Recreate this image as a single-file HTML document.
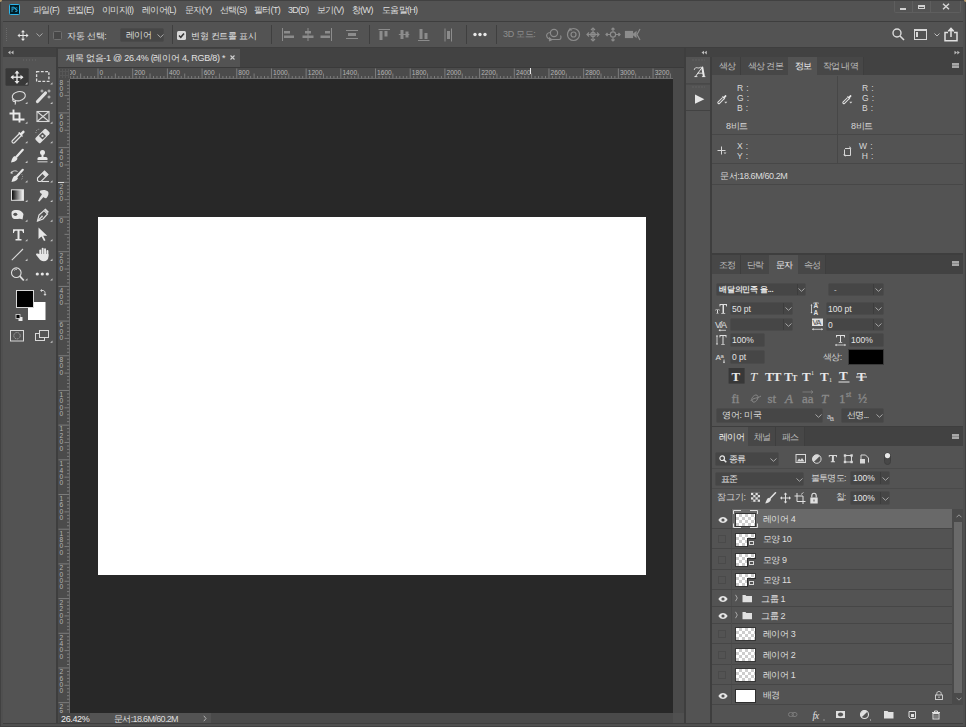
<!DOCTYPE html>
<html><head><meta charset="utf-8">
<style>
*{margin:0;padding:0;box-sizing:border-box}
html,body{width:966px;height:727px;overflow:hidden;background:#414141;font-family:"Liberation Sans",sans-serif;color:#d8d8d8}
.a{position:absolute}
.k{font-size:9px;letter-spacing:-0.7px;white-space:nowrap;line-height:10px}
</style></head><body>
<!-- frame -->
<div class="a" style="left:1px;top:1px;width:964px;height:725px;background:#4f4f4f"></div>
<!-- menu bar -->
<div class="a" style="left:1px;top:1px;width:962px;height:20px;background:#535353"></div>
<!-- options bar -->
<div class="a" style="left:3px;top:21px;width:960px;height:1px;background:#3e3e3e"></div>
<div class="a" style="left:3px;top:22px;width:960px;height:25px;background:#535353"></div>
<div class="a" style="left:3px;top:47px;width:960px;height:1px;background:#3e3e3e"></div>
<!-- toolbar -->
<div class="a" style="left:3px;top:48px;width:53px;height:9px;background:#424242"></div>
<div class="a" style="left:3px;top:57px;width:53px;height:666px;background:#535353"></div>
<div class="a" style="left:56px;top:48px;width:2px;height:675px;background:#3e3e3e"></div>

<!-- ===== TOOLBAR ===== -->
<svg class="a" style="left:0;top:0" width="58" height="350" viewBox="0 0 58 350">
<path d="M10.5 50.5L8 52.5L10.5 54.5z M13.5 50.5L11 52.5L13.5 54.5z" fill="#bdbdbd"/>
<g fill="#6a6a6a"><rect x="23" y="59.5" width="1" height="1"/><rect x="26" y="59.5" width="1" height="1"/><rect x="29" y="59.5" width="1" height="1"/><rect x="32" y="59.5" width="1" height="1"/><rect x="35" y="59.5" width="1" height="1"/></g>
<rect x="5.5" y="68.2" width="23.2" height="17.6" rx="1" fill="#383838"/>
<!-- move -->
<g fill="#e8e8e8"><rect x="11.5" y="76.5" width="11" height="1.4"/><rect x="16.3" y="71.5" width="1.4" height="11"/>
<path d="M17 70.5L19.5 73.5H14.5z M17 84L19.5 81H14.5z M10.5 77.2L13.5 74.7V79.7z M23.5 77.2L20.5 74.7V79.7z"/></g>
<!-- marquee -->
<rect x="36.6" y="71.6" width="12.3" height="9.8" fill="none" stroke="#dcdcdc" stroke-width="1.3" stroke-dasharray="2.8 1.5"/>
<!-- lasso -->
<g fill="none" stroke="#dedede" stroke-width="1.1"><ellipse cx="18.8" cy="96.2" rx="6.6" ry="4.6" transform="rotate(-12 18.8 96.2)"/><path d="M13.5 98.5C12 100 13 102 15 101.5C16 101 15.5 103 15 104.5"/></g>
<!-- magic wand -->
<path d="M37.5 101.5L45.5 93" stroke="#e0e0e0" stroke-width="3.2" stroke-linecap="round"/>
<path d="M42 89.5V92.5M40.5 91H43.5M49 89.5V92.5M47.5 91H50.5M49 95.5V98.5M47.5 97H50.5" stroke="#d0d0d0" stroke-width="0.9"/>
<!-- crop -->
<g fill="none" stroke="#e8e8e8" stroke-width="1.9"><path d="M13.5 109.5V119.5H24.5M9.5 113.5H19.5V122.5"/></g>
<!-- frame -->
<g fill="none" stroke="#d8d8d8" stroke-width="1.1"><rect x="37" y="111.5" width="12" height="10"/><path d="M37 111.5L49 121.5M49 111.5L37 121.5"/></g>
<!-- eyedropper -->
<g fill="none" stroke="#e0e0e0" stroke-width="1.2"><path d="M19 134L12.5 140.5C11.8 141.2 11.8 142 12.5 142.6C13.1 143.2 13.9 143.2 14.6 142.5L21 136"/></g>
<path d="M18 133L22 137L23 136L22 135L24.5 132.5C25 131.5 24 130 23 130.5L20.5 133L19.5 132z" fill="#e8e8e8"/>
<!-- healing -->
<g transform="rotate(-45 42.5 136)"><rect x="35" y="132.5" width="15" height="7" rx="1.5" fill="#e0e0e0"/><rect x="40" y="133.5" width="5" height="5" fill="#555"/><circle cx="42.5" cy="136" r="1.2" fill="#e0e0e0"/></g>
<path d="M36 133A3 3 0 0 1 40 129.5" stroke="#bbb" stroke-width="0.8" fill="none" stroke-dasharray="1 1"/>
<!-- brush -->
<path d="M22.8 149.8L16.5 156.8" stroke="#e6e6e6" stroke-width="2.2" stroke-linecap="round"/>
<path d="M15 156C12.5 156.5 12 159 11 162.5C14 162 17 161 17.5 158.5z" fill="#e6e6e6"/>
<!-- stamp -->
<g fill="#e6e6e6"><circle cx="42.5" cy="152.5" r="2.5"/><rect x="41.5" y="154" width="2" height="3"/><path d="M37.5 160V158.5C37.5 157.5 38.5 157 39.5 157H45.5C46.5 157 47.5 157.5 47.5 158.5V160z"/><rect x="37.5" y="161" width="10" height="1.5" fill="#aaa"/></g>
<!-- history brush -->
<path d="M22.8 169.8L16.8 176.3" stroke="#e6e6e6" stroke-width="2.2" stroke-linecap="round"/>
<path d="M15.5 175.5C13 176 12.5 178.5 11.5 182C14.5 181.5 17.5 180.5 18 178z" fill="#e6e6e6"/>
<path d="M11 172.5C13 170.5 16 170.5 17.5 171.5" stroke="#d0d0d0" stroke-width="1" fill="none"/><path d="M10 173L12.5 171V174z" fill="#d8d8d8"/>
<path d="M20 173C23 174 23.5 178 21 180" stroke="#aaa" stroke-width="0.8" fill="none" stroke-dasharray="1 1"/>
<!-- eraser -->
<g fill="none" stroke="#e0e0e0" stroke-width="1.1"><path d="M37.5 178L44.5 171L48 174.5L41 181.5H38.5L37.5 180.5z"/><path d="M41.5 181.5H49"/></g>
<path d="M42 173.5L44.5 171L48 174.5L45.5 177z" fill="#e0e0e0"/>
<!-- gradient -->
<defs><linearGradient id="gr" x1="0" x2="1"><stop offset="0" stop-color="#000"/><stop offset="1" stop-color="#fff"/></linearGradient></defs>
<rect x="11.5" y="189.8" width="12" height="10.5" fill="url(#gr)" stroke="#e0e0e0" stroke-width="1"/>
<!-- smudge -->
<path d="M38 201C40 197 41 196 42 194C40 193 39 191.5 40.5 190.5C43 189.5 46.5 190 48 191.5C49 193 48.5 196 46.5 198C45.5 198.5 44 198 43.5 197L39.5 201.5z" fill="#e0e0e0"/>
<!-- dodge -->
<path d="M11.5 213C11.5 210.5 14 210 17 210C20 210 22 211.5 23.5 214L22.5 219.5C20 218 17 219.5 14 219C12 218.5 11.5 216 11.5 213z" fill="#e6e6e6"/><ellipse cx="15.3" cy="214.3" rx="2" ry="1.6" fill="#555"/>
<!-- pen -->
<g fill="none" stroke="#e0e0e0" stroke-width="1.2"><path d="M37.5 221L39 215L44 210.5L47.5 214L43 219z"/><path d="M37.5 221L41.5 217"/></g><path d="M44 209.5L45.5 208.5L48.8 211.8L47.8 213.3z" fill="#e0e0e0"/><circle cx="42" cy="216.5" r="0.9" fill="#e0e0e0"/>
<!-- type -->
<path d="M13 229.3H24V233H23C22.8 231.2 22.3 230.8 20.5 230.8H19.5V239H21.5V240.5H15.5V239H17.5V230.8H16.5C14.7 230.8 14.2 231.2 14 233H13z" fill="#e8e8e8"/>
<!-- path select -->
<path d="M38.5 227.5V239L41.5 236.5L44 241L45.5 240.2L43.2 235.8H47.2z" fill="#e6e6e6"/>
<!-- line -->
<path d="M11.8 260.2L23 249" stroke="#dadada" stroke-width="1.1"/>
<!-- hand -->
<g fill="#e6e6e6"><rect x="39.3" y="249.5" width="1.9" height="7" rx="0.95"/><rect x="41.7" y="247.8" width="1.9" height="8" rx="0.95"/><rect x="44.1" y="248.3" width="1.9" height="8" rx="0.95"/><rect x="46.5" y="250" width="1.9" height="7" rx="0.95"/>
<path d="M39.3 254H48.4V257C48.4 259.5 46.5 261.3 43.8 261.3C41.5 261.3 40.3 260.3 39 258.5L36.2 255C35.6 254.2 36.6 253 37.5 253.6z"/></g>
<!-- zoom -->
<circle cx="16.3" cy="272.7" r="4.8" fill="none" stroke="#e0e0e0" stroke-width="1.1"/><path d="M19.8 276.2L23.8 280.5" stroke="#e0e0e0" stroke-width="1.8"/><path d="M14 270.5A3 3 0 0 1 17 269.5" stroke="#e0e0e0" stroke-width="0.7" fill="none"/>
<!-- dots -->
<g fill="#e6e6e6"><circle cx="37.3" cy="274" r="1.6"/><circle cx="42.3" cy="274" r="1.6"/><circle cx="47.3" cy="274" r="1.6"/></g>
<path d="M25.2 84.5H27.5V82.2z" fill="#c8c8c8"/><path d="M25.2 104.1H27.5V101.8z" fill="#c8c8c8"/><path d="M25.2 123.7H27.5V121.4z" fill="#c8c8c8"/><path d="M25.2 143.3H27.5V141.0z" fill="#c8c8c8"/><path d="M25.2 162.9H27.5V160.6z" fill="#c8c8c8"/><path d="M25.2 182.5H27.5V180.2z" fill="#c8c8c8"/><path d="M25.2 202.1H27.5V199.8z" fill="#c8c8c8"/><path d="M25.2 221.7H27.5V219.4z" fill="#c8c8c8"/><path d="M25.2 241.3H27.5V239.0z" fill="#c8c8c8"/><path d="M25.2 260.9H27.5V258.6z" fill="#c8c8c8"/><path d="M25.2 280.5H27.5V278.2z" fill="#c8c8c8"/><path d="M50.2 84.5H52.5V82.2z" fill="#c8c8c8"/><path d="M50.2 104.1H52.5V101.8z" fill="#c8c8c8"/><path d="M50.2 123.7H52.5V121.4z" fill="#c8c8c8"/><path d="M50.2 143.3H52.5V141.0z" fill="#c8c8c8"/><path d="M50.2 162.9H52.5V160.6z" fill="#c8c8c8"/><path d="M50.2 182.5H52.5V180.2z" fill="#c8c8c8"/><path d="M50.2 202.1H52.5V199.8z" fill="#c8c8c8"/><path d="M50.2 221.7H52.5V219.4z" fill="#c8c8c8"/><path d="M50.2 241.3H52.5V239.0z" fill="#c8c8c8"/><path d="M50.2 260.9H52.5V258.6z" fill="#c8c8c8"/><path d="M50.2 280.5H52.5V278.2z" fill="#c8c8c8"/>
<!-- colors -->
<rect x="28" y="302" width="17.5" height="18" fill="#fff"/>
<rect x="16.5" y="290.5" width="17" height="17" fill="#000" stroke="#d8d8d8" stroke-width="1"/>
<path d="M41.5 290.5H43C44 290.5 45 291.5 45 292.5V294.5" stroke="#d8d8d8" stroke-width="1" fill="none"/><path d="M40 290.5L42 289V292z M45 296L43.5 294H46.5z" fill="#d8d8d8"/>
<rect x="18.5" y="317" width="4" height="4" fill="#e8e8e8"/><rect x="16" y="314.5" width="4" height="4" fill="#000" stroke="#ddd" stroke-width="0.8"/>
<!-- quick mask / screen -->
<rect x="10.5" y="330.5" width="13" height="10.5" fill="none" stroke="#d8d8d8" stroke-width="1"/><circle cx="17" cy="335.7" r="3.2" fill="none" stroke="#bbb" stroke-width="0.8" stroke-dasharray="1.2 0.8"/>
<rect x="35.5" y="333.5" width="9" height="7" fill="none" stroke="#d8d8d8" stroke-width="1"/><rect x="39.5" y="330.5" width="9" height="7" fill="#555" stroke="#d8d8d8" stroke-width="1"/>
<path d="M50.2 342.8H52.5V340.5z" fill="#c8c8c8"/>
</svg>

<!-- doc tab bar -->
<div class="a" style="left:58px;top:48px;width:626px;height:19px;background:#424242"></div>
<div class="a" style="left:58px;top:49px;width:182px;height:18px;background:#535353"></div>
<div class="a" style="left:58px;top:67px;width:626px;height:1px;background:#3a3a3a"></div>
<!-- rulers -->
<div class="a" style="left:58px;top:68px;width:615px;height:11px;background:#4b4b4b"></div>
<div class="a" style="left:58px;top:68px;width:12px;height:645px;background:#4b4b4b"></div>
<!-- canvas -->
<div class="a" style="left:70px;top:79px;width:603px;height:634px;background:#282828"></div>
<div class="a" style="left:98px;top:217px;width:548px;height:358px;background:#ffffff"></div>

<!-- ===== DOC TAB ===== -->
<div class="a k" style="left:66px;top:53px;color:#e2e2e2;letter-spacing:-0.25px">제목 없음-1 @ 26.4% (레이어 4, RGB/8) *</div>
<svg class="a" style="left:230px;top:55px" width="5" height="5" viewBox="0 0 5 5"><path d="M0.5 0.5L4.5 4.5M4.5 0.5L0.5 4.5" stroke="#cfcfcf" stroke-width="1.1"/></svg>
<!-- rulers -->
<svg class="a" style="left:58px;top:68px" width="12" height="11" viewBox="0 0 12 11"><g fill="#565656"><rect x="1" y="1" width="1" height="9"/><rect x="4" y="1" width="1" height="9"/><rect x="7" y="1" width="1" height="9"/><rect x="10" y="1" width="1" height="9"/><rect x="1" y="3" width="10" height="1"/><rect x="1" y="7" width="10" height="1"/></g></svg>
<svg class="a" style="left:0;top:68px" width="673" height="11" viewBox="0 0 673 11"><defs><clipPath id="tc"><rect x="70" y="0" width="603" height="11"/></clipPath></defs><g clip-path="url(#tc)"><g fill="#7c7c7c"><rect x="62.81" y="0.5" width="1" height="10"/><rect x="66.28" y="8" width="1" height="2.5"/><rect x="69.75" y="8" width="1" height="2.5"/><rect x="73.22" y="8" width="1" height="2.5"/><rect x="76.69" y="8" width="1" height="2.5"/><rect x="80.16" y="5.5" width="1" height="5"/><rect x="83.62" y="8" width="1" height="2.5"/><rect x="87.09" y="8" width="1" height="2.5"/><rect x="90.56" y="8" width="1" height="2.5"/><rect x="94.03" y="8" width="1" height="2.5"/><rect x="97.50" y="0.5" width="1" height="10"/><rect x="100.97" y="8" width="1" height="2.5"/><rect x="104.44" y="8" width="1" height="2.5"/><rect x="107.91" y="8" width="1" height="2.5"/><rect x="111.38" y="8" width="1" height="2.5"/><rect x="114.84" y="5.5" width="1" height="5"/><rect x="118.31" y="8" width="1" height="2.5"/><rect x="121.78" y="8" width="1" height="2.5"/><rect x="125.25" y="8" width="1" height="2.5"/><rect x="128.72" y="8" width="1" height="2.5"/><rect x="132.19" y="0.5" width="1" height="10"/><rect x="135.66" y="8" width="1" height="2.5"/><rect x="139.13" y="8" width="1" height="2.5"/><rect x="142.60" y="8" width="1" height="2.5"/><rect x="146.07" y="8" width="1" height="2.5"/><rect x="149.53" y="5.5" width="1" height="5"/><rect x="153.00" y="8" width="1" height="2.5"/><rect x="156.47" y="8" width="1" height="2.5"/><rect x="159.94" y="8" width="1" height="2.5"/><rect x="163.41" y="8" width="1" height="2.5"/><rect x="166.88" y="0.5" width="1" height="10"/><rect x="170.35" y="8" width="1" height="2.5"/><rect x="173.82" y="8" width="1" height="2.5"/><rect x="177.29" y="8" width="1" height="2.5"/><rect x="180.76" y="8" width="1" height="2.5"/><rect x="184.22" y="5.5" width="1" height="5"/><rect x="187.69" y="8" width="1" height="2.5"/><rect x="191.16" y="8" width="1" height="2.5"/><rect x="194.63" y="8" width="1" height="2.5"/><rect x="198.10" y="8" width="1" height="2.5"/><rect x="201.57" y="0.5" width="1" height="10"/><rect x="205.04" y="8" width="1" height="2.5"/><rect x="208.51" y="8" width="1" height="2.5"/><rect x="211.98" y="8" width="1" height="2.5"/><rect x="215.45" y="8" width="1" height="2.5"/><rect x="218.91" y="5.5" width="1" height="5"/><rect x="222.38" y="8" width="1" height="2.5"/><rect x="225.85" y="8" width="1" height="2.5"/><rect x="229.32" y="8" width="1" height="2.5"/><rect x="232.79" y="8" width="1" height="2.5"/><rect x="236.26" y="0.5" width="1" height="10"/><rect x="239.73" y="8" width="1" height="2.5"/><rect x="243.20" y="8" width="1" height="2.5"/><rect x="246.67" y="8" width="1" height="2.5"/><rect x="250.14" y="8" width="1" height="2.5"/><rect x="253.60" y="5.5" width="1" height="5"/><rect x="257.07" y="8" width="1" height="2.5"/><rect x="260.54" y="8" width="1" height="2.5"/><rect x="264.01" y="8" width="1" height="2.5"/><rect x="267.48" y="8" width="1" height="2.5"/><rect x="270.95" y="0.5" width="1" height="10"/><rect x="274.42" y="8" width="1" height="2.5"/><rect x="277.89" y="8" width="1" height="2.5"/><rect x="281.36" y="8" width="1" height="2.5"/><rect x="284.83" y="8" width="1" height="2.5"/><rect x="288.29" y="5.5" width="1" height="5"/><rect x="291.76" y="8" width="1" height="2.5"/><rect x="295.23" y="8" width="1" height="2.5"/><rect x="298.70" y="8" width="1" height="2.5"/><rect x="302.17" y="8" width="1" height="2.5"/><rect x="305.64" y="0.5" width="1" height="10"/><rect x="309.11" y="8" width="1" height="2.5"/><rect x="312.58" y="8" width="1" height="2.5"/><rect x="316.05" y="8" width="1" height="2.5"/><rect x="319.52" y="8" width="1" height="2.5"/><rect x="322.99" y="5.5" width="1" height="5"/><rect x="326.45" y="8" width="1" height="2.5"/><rect x="329.92" y="8" width="1" height="2.5"/><rect x="333.39" y="8" width="1" height="2.5"/><rect x="336.86" y="8" width="1" height="2.5"/><rect x="340.33" y="0.5" width="1" height="10"/><rect x="343.80" y="8" width="1" height="2.5"/><rect x="347.27" y="8" width="1" height="2.5"/><rect x="350.74" y="8" width="1" height="2.5"/><rect x="354.21" y="8" width="1" height="2.5"/><rect x="357.68" y="5.5" width="1" height="5"/><rect x="361.14" y="8" width="1" height="2.5"/><rect x="364.61" y="8" width="1" height="2.5"/><rect x="368.08" y="8" width="1" height="2.5"/><rect x="371.55" y="8" width="1" height="2.5"/><rect x="375.02" y="0.5" width="1" height="10"/><rect x="378.49" y="8" width="1" height="2.5"/><rect x="381.96" y="8" width="1" height="2.5"/><rect x="385.43" y="8" width="1" height="2.5"/><rect x="388.90" y="8" width="1" height="2.5"/><rect x="392.36" y="5.5" width="1" height="5"/><rect x="395.83" y="8" width="1" height="2.5"/><rect x="399.30" y="8" width="1" height="2.5"/><rect x="402.77" y="8" width="1" height="2.5"/><rect x="406.24" y="8" width="1" height="2.5"/><rect x="409.71" y="0.5" width="1" height="10"/><rect x="413.18" y="8" width="1" height="2.5"/><rect x="416.65" y="8" width="1" height="2.5"/><rect x="420.12" y="8" width="1" height="2.5"/><rect x="423.59" y="8" width="1" height="2.5"/><rect x="427.05" y="5.5" width="1" height="5"/><rect x="430.52" y="8" width="1" height="2.5"/><rect x="433.99" y="8" width="1" height="2.5"/><rect x="437.46" y="8" width="1" height="2.5"/><rect x="440.93" y="8" width="1" height="2.5"/><rect x="444.40" y="0.5" width="1" height="10"/><rect x="447.87" y="8" width="1" height="2.5"/><rect x="451.34" y="8" width="1" height="2.5"/><rect x="454.81" y="8" width="1" height="2.5"/><rect x="458.28" y="8" width="1" height="2.5"/><rect x="461.75" y="5.5" width="1" height="5"/><rect x="465.21" y="8" width="1" height="2.5"/><rect x="468.68" y="8" width="1" height="2.5"/><rect x="472.15" y="8" width="1" height="2.5"/><rect x="475.62" y="8" width="1" height="2.5"/><rect x="479.09" y="0.5" width="1" height="10"/><rect x="482.56" y="8" width="1" height="2.5"/><rect x="486.03" y="8" width="1" height="2.5"/><rect x="489.50" y="8" width="1" height="2.5"/><rect x="492.97" y="8" width="1" height="2.5"/><rect x="496.44" y="5.5" width="1" height="5"/><rect x="499.90" y="8" width="1" height="2.5"/><rect x="503.37" y="8" width="1" height="2.5"/><rect x="506.84" y="8" width="1" height="2.5"/><rect x="510.31" y="8" width="1" height="2.5"/><rect x="513.78" y="0.5" width="1" height="10"/><rect x="517.25" y="8" width="1" height="2.5"/><rect x="520.72" y="8" width="1" height="2.5"/><rect x="524.19" y="8" width="1" height="2.5"/><rect x="527.66" y="8" width="1" height="2.5"/><rect x="531.12" y="5.5" width="1" height="5"/><rect x="534.59" y="8" width="1" height="2.5"/><rect x="538.06" y="8" width="1" height="2.5"/><rect x="541.53" y="8" width="1" height="2.5"/><rect x="545.00" y="8" width="1" height="2.5"/><rect x="548.47" y="0.5" width="1" height="10"/><rect x="551.94" y="8" width="1" height="2.5"/><rect x="555.41" y="8" width="1" height="2.5"/><rect x="558.88" y="8" width="1" height="2.5"/><rect x="562.35" y="8" width="1" height="2.5"/><rect x="565.81" y="5.5" width="1" height="5"/><rect x="569.28" y="8" width="1" height="2.5"/><rect x="572.75" y="8" width="1" height="2.5"/><rect x="576.22" y="8" width="1" height="2.5"/><rect x="579.69" y="8" width="1" height="2.5"/><rect x="583.16" y="0.5" width="1" height="10"/><rect x="586.63" y="8" width="1" height="2.5"/><rect x="590.10" y="8" width="1" height="2.5"/><rect x="593.57" y="8" width="1" height="2.5"/><rect x="597.04" y="8" width="1" height="2.5"/><rect x="600.50" y="5.5" width="1" height="5"/><rect x="603.97" y="8" width="1" height="2.5"/><rect x="607.44" y="8" width="1" height="2.5"/><rect x="610.91" y="8" width="1" height="2.5"/><rect x="614.38" y="8" width="1" height="2.5"/><rect x="617.85" y="0.5" width="1" height="10"/><rect x="621.32" y="8" width="1" height="2.5"/><rect x="624.79" y="8" width="1" height="2.5"/><rect x="628.26" y="8" width="1" height="2.5"/><rect x="631.73" y="8" width="1" height="2.5"/><rect x="635.19" y="5.5" width="1" height="5"/><rect x="638.66" y="8" width="1" height="2.5"/><rect x="642.13" y="8" width="1" height="2.5"/><rect x="645.60" y="8" width="1" height="2.5"/><rect x="649.07" y="8" width="1" height="2.5"/><rect x="652.54" y="0.5" width="1" height="10"/><rect x="656.01" y="8" width="1" height="2.5"/><rect x="659.48" y="8" width="1" height="2.5"/><rect x="662.95" y="8" width="1" height="2.5"/><rect x="666.42" y="8" width="1" height="2.5"/><rect x="669.88" y="5.5" width="1" height="5"/></g><g fill="#b4b4b4" font-family="Liberation Sans" font-size="6.6"><text x="64.91" y="7.2">200</text><text x="99.60" y="7.2">0</text><text x="134.29" y="7.2">200</text><text x="168.98" y="7.2">400</text><text x="203.67" y="7.2">600</text><text x="238.36" y="7.2">800</text><text x="273.05" y="7.2">1000</text><text x="307.74" y="7.2">1200</text><text x="342.43" y="7.2">1400</text><text x="377.12" y="7.2">1600</text><text x="411.81" y="7.2">1800</text><text x="446.50" y="7.2">2000</text><text x="481.19" y="7.2">2200</text><text x="515.88" y="7.2">2400</text><text x="550.57" y="7.2">2600</text><text x="585.26" y="7.2">2800</text><text x="619.95" y="7.2">3000</text><text x="654.64" y="7.2">3200</text></g></g><rect x="70" y="10.2" width="603" height="0.8" fill="#727272"/></svg><svg class="a" style="left:58px;top:0" width="12" height="713" viewBox="0 0 12 713"><defs><clipPath id="lc"><rect x="0" y="79" width="12" height="634"/></clipPath></defs><g clip-path="url(#lc)"><g fill="#7c7c7c"><rect x="6.5" y="60.40" width="5" height="1"/><rect x="9" y="63.86" width="2.5" height="1"/><rect x="9" y="67.33" width="2.5" height="1"/><rect x="9" y="70.80" width="2.5" height="1"/><rect x="9" y="74.27" width="2.5" height="1"/><rect x="0.5" y="77.74" width="11" height="1"/><rect x="9" y="81.21" width="2.5" height="1"/><rect x="9" y="84.68" width="2.5" height="1"/><rect x="9" y="88.15" width="2.5" height="1"/><rect x="9" y="91.62" width="2.5" height="1"/><rect x="6.5" y="95.09" width="5" height="1"/><rect x="9" y="98.55" width="2.5" height="1"/><rect x="9" y="102.02" width="2.5" height="1"/><rect x="9" y="105.49" width="2.5" height="1"/><rect x="9" y="108.96" width="2.5" height="1"/><rect x="0.5" y="112.43" width="11" height="1"/><rect x="9" y="115.90" width="2.5" height="1"/><rect x="9" y="119.37" width="2.5" height="1"/><rect x="9" y="122.84" width="2.5" height="1"/><rect x="9" y="126.31" width="2.5" height="1"/><rect x="6.5" y="129.78" width="5" height="1"/><rect x="9" y="133.24" width="2.5" height="1"/><rect x="9" y="136.71" width="2.5" height="1"/><rect x="9" y="140.18" width="2.5" height="1"/><rect x="9" y="143.65" width="2.5" height="1"/><rect x="0.5" y="147.12" width="11" height="1"/><rect x="9" y="150.59" width="2.5" height="1"/><rect x="9" y="154.06" width="2.5" height="1"/><rect x="9" y="157.53" width="2.5" height="1"/><rect x="9" y="161.00" width="2.5" height="1"/><rect x="6.5" y="164.47" width="5" height="1"/><rect x="9" y="167.93" width="2.5" height="1"/><rect x="9" y="171.40" width="2.5" height="1"/><rect x="9" y="174.87" width="2.5" height="1"/><rect x="9" y="178.34" width="2.5" height="1"/><rect x="0.5" y="181.81" width="11" height="1"/><rect x="9" y="185.28" width="2.5" height="1"/><rect x="9" y="188.75" width="2.5" height="1"/><rect x="9" y="192.22" width="2.5" height="1"/><rect x="9" y="195.69" width="2.5" height="1"/><rect x="6.5" y="199.16" width="5" height="1"/><rect x="9" y="202.62" width="2.5" height="1"/><rect x="9" y="206.09" width="2.5" height="1"/><rect x="9" y="209.56" width="2.5" height="1"/><rect x="9" y="213.03" width="2.5" height="1"/><rect x="0.5" y="216.50" width="11" height="1"/><rect x="9" y="219.97" width="2.5" height="1"/><rect x="9" y="223.44" width="2.5" height="1"/><rect x="9" y="226.91" width="2.5" height="1"/><rect x="9" y="230.38" width="2.5" height="1"/><rect x="6.5" y="233.84" width="5" height="1"/><rect x="9" y="237.31" width="2.5" height="1"/><rect x="9" y="240.78" width="2.5" height="1"/><rect x="9" y="244.25" width="2.5" height="1"/><rect x="9" y="247.72" width="2.5" height="1"/><rect x="0.5" y="251.19" width="11" height="1"/><rect x="9" y="254.66" width="2.5" height="1"/><rect x="9" y="258.13" width="2.5" height="1"/><rect x="9" y="261.60" width="2.5" height="1"/><rect x="9" y="265.07" width="2.5" height="1"/><rect x="6.5" y="268.53" width="5" height="1"/><rect x="9" y="272.00" width="2.5" height="1"/><rect x="9" y="275.47" width="2.5" height="1"/><rect x="9" y="278.94" width="2.5" height="1"/><rect x="9" y="282.41" width="2.5" height="1"/><rect x="0.5" y="285.88" width="11" height="1"/><rect x="9" y="289.35" width="2.5" height="1"/><rect x="9" y="292.82" width="2.5" height="1"/><rect x="9" y="296.29" width="2.5" height="1"/><rect x="9" y="299.76" width="2.5" height="1"/><rect x="6.5" y="303.23" width="5" height="1"/><rect x="9" y="306.69" width="2.5" height="1"/><rect x="9" y="310.16" width="2.5" height="1"/><rect x="9" y="313.63" width="2.5" height="1"/><rect x="9" y="317.10" width="2.5" height="1"/><rect x="0.5" y="320.57" width="11" height="1"/><rect x="9" y="324.04" width="2.5" height="1"/><rect x="9" y="327.51" width="2.5" height="1"/><rect x="9" y="330.98" width="2.5" height="1"/><rect x="9" y="334.45" width="2.5" height="1"/><rect x="6.5" y="337.91" width="5" height="1"/><rect x="9" y="341.38" width="2.5" height="1"/><rect x="9" y="344.85" width="2.5" height="1"/><rect x="9" y="348.32" width="2.5" height="1"/><rect x="9" y="351.79" width="2.5" height="1"/><rect x="0.5" y="355.26" width="11" height="1"/><rect x="9" y="358.73" width="2.5" height="1"/><rect x="9" y="362.20" width="2.5" height="1"/><rect x="9" y="365.67" width="2.5" height="1"/><rect x="9" y="369.14" width="2.5" height="1"/><rect x="6.5" y="372.61" width="5" height="1"/><rect x="9" y="376.07" width="2.5" height="1"/><rect x="9" y="379.54" width="2.5" height="1"/><rect x="9" y="383.01" width="2.5" height="1"/><rect x="9" y="386.48" width="2.5" height="1"/><rect x="0.5" y="389.95" width="11" height="1"/><rect x="9" y="393.42" width="2.5" height="1"/><rect x="9" y="396.89" width="2.5" height="1"/><rect x="9" y="400.36" width="2.5" height="1"/><rect x="9" y="403.83" width="2.5" height="1"/><rect x="6.5" y="407.29" width="5" height="1"/><rect x="9" y="410.76" width="2.5" height="1"/><rect x="9" y="414.23" width="2.5" height="1"/><rect x="9" y="417.70" width="2.5" height="1"/><rect x="9" y="421.17" width="2.5" height="1"/><rect x="0.5" y="424.64" width="11" height="1"/><rect x="9" y="428.11" width="2.5" height="1"/><rect x="9" y="431.58" width="2.5" height="1"/><rect x="9" y="435.05" width="2.5" height="1"/><rect x="9" y="438.52" width="2.5" height="1"/><rect x="6.5" y="441.99" width="5" height="1"/><rect x="9" y="445.45" width="2.5" height="1"/><rect x="9" y="448.92" width="2.5" height="1"/><rect x="9" y="452.39" width="2.5" height="1"/><rect x="9" y="455.86" width="2.5" height="1"/><rect x="0.5" y="459.33" width="11" height="1"/><rect x="9" y="462.80" width="2.5" height="1"/><rect x="9" y="466.27" width="2.5" height="1"/><rect x="9" y="469.74" width="2.5" height="1"/><rect x="9" y="473.21" width="2.5" height="1"/><rect x="6.5" y="476.68" width="5" height="1"/><rect x="9" y="480.14" width="2.5" height="1"/><rect x="9" y="483.61" width="2.5" height="1"/><rect x="9" y="487.08" width="2.5" height="1"/><rect x="9" y="490.55" width="2.5" height="1"/><rect x="0.5" y="494.02" width="11" height="1"/><rect x="9" y="497.49" width="2.5" height="1"/><rect x="9" y="500.96" width="2.5" height="1"/><rect x="9" y="504.43" width="2.5" height="1"/><rect x="9" y="507.90" width="2.5" height="1"/><rect x="6.5" y="511.36" width="5" height="1"/><rect x="9" y="514.83" width="2.5" height="1"/><rect x="9" y="518.30" width="2.5" height="1"/><rect x="9" y="521.77" width="2.5" height="1"/><rect x="9" y="525.24" width="2.5" height="1"/><rect x="0.5" y="528.71" width="11" height="1"/><rect x="9" y="532.18" width="2.5" height="1"/><rect x="9" y="535.65" width="2.5" height="1"/><rect x="9" y="539.12" width="2.5" height="1"/><rect x="9" y="542.59" width="2.5" height="1"/><rect x="6.5" y="546.05" width="5" height="1"/><rect x="9" y="549.52" width="2.5" height="1"/><rect x="9" y="552.99" width="2.5" height="1"/><rect x="9" y="556.46" width="2.5" height="1"/><rect x="9" y="559.93" width="2.5" height="1"/><rect x="0.5" y="563.40" width="11" height="1"/><rect x="9" y="566.87" width="2.5" height="1"/><rect x="9" y="570.34" width="2.5" height="1"/><rect x="9" y="573.81" width="2.5" height="1"/><rect x="9" y="577.28" width="2.5" height="1"/><rect x="6.5" y="580.75" width="5" height="1"/><rect x="9" y="584.21" width="2.5" height="1"/><rect x="9" y="587.68" width="2.5" height="1"/><rect x="9" y="591.15" width="2.5" height="1"/><rect x="9" y="594.62" width="2.5" height="1"/><rect x="0.5" y="598.09" width="11" height="1"/><rect x="9" y="601.56" width="2.5" height="1"/><rect x="9" y="605.03" width="2.5" height="1"/><rect x="9" y="608.50" width="2.5" height="1"/><rect x="9" y="611.97" width="2.5" height="1"/><rect x="6.5" y="615.43" width="5" height="1"/><rect x="9" y="618.90" width="2.5" height="1"/><rect x="9" y="622.37" width="2.5" height="1"/><rect x="9" y="625.84" width="2.5" height="1"/><rect x="9" y="629.31" width="2.5" height="1"/><rect x="0.5" y="632.78" width="11" height="1"/><rect x="9" y="636.25" width="2.5" height="1"/><rect x="9" y="639.72" width="2.5" height="1"/><rect x="9" y="643.19" width="2.5" height="1"/><rect x="9" y="646.66" width="2.5" height="1"/><rect x="6.5" y="650.12" width="5" height="1"/><rect x="9" y="653.59" width="2.5" height="1"/><rect x="9" y="657.06" width="2.5" height="1"/><rect x="9" y="660.53" width="2.5" height="1"/><rect x="9" y="664.00" width="2.5" height="1"/><rect x="0.5" y="667.47" width="11" height="1"/><rect x="9" y="670.94" width="2.5" height="1"/><rect x="9" y="674.41" width="2.5" height="1"/><rect x="9" y="677.88" width="2.5" height="1"/><rect x="9" y="681.35" width="2.5" height="1"/><rect x="6.5" y="684.81" width="5" height="1"/><rect x="9" y="688.28" width="2.5" height="1"/><rect x="9" y="691.75" width="2.5" height="1"/><rect x="9" y="695.22" width="2.5" height="1"/><rect x="9" y="698.69" width="2.5" height="1"/><rect x="0.5" y="702.16" width="11" height="1"/><rect x="9" y="705.63" width="2.5" height="1"/><rect x="9" y="709.10" width="2.5" height="1"/></g><g fill="#b4b4b4" font-family="Liberation Sans" font-size="6.6"><text x="1.5" y="84.54">8</text><text x="1.5" y="90.94">0</text><text x="1.5" y="97.34">0</text><text x="1.5" y="119.23">6</text><text x="1.5" y="125.63">0</text><text x="1.5" y="132.03">0</text><text x="1.5" y="153.92">4</text><text x="1.5" y="160.32">0</text><text x="1.5" y="166.72">0</text><text x="1.5" y="188.61">2</text><text x="1.5" y="195.01">0</text><text x="1.5" y="201.41">0</text><text x="1.5" y="223.30">0</text><text x="1.5" y="257.99">2</text><text x="1.5" y="264.39">0</text><text x="1.5" y="270.79">0</text><text x="1.5" y="292.68">4</text><text x="1.5" y="299.08">0</text><text x="1.5" y="305.48">0</text><text x="1.5" y="327.37">6</text><text x="1.5" y="333.77">0</text><text x="1.5" y="340.17">0</text><text x="1.5" y="362.06">8</text><text x="1.5" y="368.46">0</text><text x="1.5" y="374.86">0</text><text x="1.5" y="396.75">1</text><text x="1.5" y="403.15">0</text><text x="1.5" y="409.55">0</text><text x="1.5" y="415.95">0</text><text x="1.5" y="431.44">1</text><text x="1.5" y="437.84">2</text><text x="1.5" y="444.24">0</text><text x="1.5" y="450.64">0</text><text x="1.5" y="466.13">1</text><text x="1.5" y="472.53">4</text><text x="1.5" y="478.93">0</text><text x="1.5" y="485.33">0</text><text x="1.5" y="500.82">1</text><text x="1.5" y="507.22">6</text><text x="1.5" y="513.62">0</text><text x="1.5" y="520.02">0</text><text x="1.5" y="535.51">1</text><text x="1.5" y="541.91">8</text><text x="1.5" y="548.31">0</text><text x="1.5" y="554.71">0</text><text x="1.5" y="570.20">2</text><text x="1.5" y="576.60">0</text><text x="1.5" y="583.00">0</text><text x="1.5" y="589.40">0</text><text x="1.5" y="604.89">2</text><text x="1.5" y="611.29">2</text><text x="1.5" y="617.69">0</text><text x="1.5" y="624.09">0</text><text x="1.5" y="639.58">2</text><text x="1.5" y="645.98">4</text><text x="1.5" y="652.38">0</text><text x="1.5" y="658.78">0</text><text x="1.5" y="674.27">2</text><text x="1.5" y="680.67">6</text><text x="1.5" y="687.07">0</text><text x="1.5" y="693.47">0</text><text x="1.5" y="708.96">2</text><text x="1.5" y="715.36">8</text><text x="1.5" y="721.76">0</text><text x="1.5" y="728.16">0</text></g></g><rect x="11.2" y="79" width="0.8" height="634" fill="#727272"/></svg>
<div class="a" style="left:530px;top:68px;width:1px;height:6px;background:#e8e8e8"></div>
<div class="a" style="left:58px;top:182px;width:6px;height:1px;background:#d8d8d8"></div>
<!-- v scrollbar -->
<div class="a" style="left:673px;top:68px;width:11px;height:645px;background:#4a4a4a"></div>
<!-- status bar -->
<div class="a" style="left:58px;top:713px;width:626px;height:10px;background:#4a4a4a"></div>
<div class="a" style="left:90px;top:713px;width:121px;height:10px;background:#535353"></div>
<!-- bottom border -->
<div class="a" style="left:3px;top:723px;width:960px;height:1px;background:#3e3e3e"></div>
<!-- docks -->
<div class="a" style="left:684px;top:48px;width:2px;height:675px;background:#3e3e3e"></div>
<div class="a" style="left:686px;top:48px;width:277px;height:9px;background:#424242"></div>
<div class="a" style="left:686px;top:57px;width:24px;height:666px;background:#535353"></div>
<div class="a" style="left:710px;top:57px;width:2px;height:666px;background:#3e3e3e"></div>
<!-- right panels -->
<div class="a" style="left:712px;top:57px;width:251px;height:18px;background:#424242"></div>
<div class="a" style="left:712px;top:75px;width:251px;height:178px;background:#535353"></div>
<div class="a" style="left:712px;top:253px;width:251px;height:2px;background:#3e3e3e"></div>
<div class="a" style="left:712px;top:255px;width:251px;height:19px;background:#424242"></div>
<div class="a" style="left:712px;top:274px;width:251px;height:152px;background:#535353"></div>
<div class="a" style="left:712px;top:426px;width:251px;height:1px;background:#3e3e3e"></div>
<div class="a" style="left:712px;top:427px;width:251px;height:19px;background:#424242"></div>
<div class="a" style="left:712px;top:446px;width:251px;height:277px;background:#535353"></div>


<!-- ===== STATUS BAR ===== -->
<div class="a" style="left:673px;top:713px;width:11px;height:10px;background:#505050"></div>
<div class="a" style="left:59px;top:713px;width:31px;height:10px;background:#474747"></div>
<div class="a k" style="left:61px;top:713.5px;color:#ececec;letter-spacing:-0.35px">26.42%</div>
<div class="a k" style="left:114px;top:713.5px;color:#dcdcdc;letter-spacing:-0.65px">문서:18.6M/60.2M</div>
<svg class="a" style="left:203px;top:715px" width="4" height="7" viewBox="0 0 4 7"><path d="M0.8 0.8L3 3.5L0.8 6.2" stroke="#bbb" fill="none" stroke-width="0.9"/></svg>
<!-- ===== NARROW COLUMN ===== -->
<svg class="a" style="left:684px;top:48px" width="279" height="66" viewBox="684 48 279 66">
<path d="M704 50.8L701.5 52.6L704 54.4z M706.8 50.8L704.3 52.6L706.8 54.4z" fill="#bdbdbd"/>
<path d="M954.5 50.8L957 52.6L954.5 54.4z M957.3 50.8L959.8 52.6L957.3 54.4z" fill="#bdbdbd"/>
<rect x="686" y="83.4" width="24" height="1" fill="#424242"/>
<rect x="686" y="110" width="24" height="1" fill="#424242"/>
<g fill="#616161"><rect x="692" y="59.5" width="2" height="1"/><rect x="695" y="59.5" width="2" height="1"/><rect x="698" y="59.5" width="2" height="1"/><rect x="701" y="59.5" width="2" height="1"/><rect x="704" y="59.5" width="1" height="1"/>
<rect x="692" y="86.5" width="2" height="1"/><rect x="695" y="86.5" width="2" height="1"/><rect x="698" y="86.5" width="2" height="1"/><rect x="701" y="86.5" width="2" height="1"/><rect x="704" y="86.5" width="1" height="1"/></g>
<g fill="none" stroke="#e8e8e8" stroke-linecap="round"><path d="M695.5 76.5C697.5 74 700 70 702.3 67.2" stroke-width="1"/><path d="M702.3 67.5L703.8 76" stroke-width="2"/><path d="M698 73.2H703.3" stroke-width="0.9"/><path d="M694.3 69.5C694.5 68 696 67.3 697.5 67.8C698.5 68.2 699.5 68 700.5 67.3" stroke-width="0.9"/><path d="M702.3 76.6H705" stroke-width="0.9"/><path d="M694.8 76.6H697" stroke-width="0.9"/></g>
<path d="M695 94.6L704.4 99.2L695 103.7z" fill="#e6e6e6"/>
</svg>

<!-- ===== MENU BAR CONTENT ===== -->
<svg class="a" style="left:9px;top:4px" width="11" height="11" viewBox="0 0 11 11"><rect x="0.5" y="0.5" width="10" height="10" rx="0.8" fill="#001d26" stroke="#2db6ec" stroke-width="1"/><path d="M2.6 8V2.8H4.3C5.3 2.8 5.8 3.3 5.8 4.1C5.8 4.9 5.3 5.4 4.3 5.4H3.4V8z M3.4 3.5V4.7H4.2C4.7 4.7 4.9 4.5 4.9 4.1C4.9 3.7 4.7 3.5 4.2 3.5z" fill="#2db6ec"/><path d="M8.4 4.6C8.1 4.4 7.7 4.3 7.4 4.3C7 4.3 6.8 4.5 6.8 4.7C6.8 5.3 8.6 5.1 8.6 6.5C8.6 7.3 8 7.8 7.2 7.8C6.8 7.8 6.4 7.7 6.1 7.5V6.8C6.4 7 6.8 7.1 7.1 7.1C7.5 7.1 7.8 6.9 7.8 6.6C7.8 5.9 6 6.2 6 4.8C6 4.1 6.6 3.6 7.4 3.6C7.8 3.6 8.1 3.7 8.4 3.8z" fill="#2db6ec"/></svg>
<div class="a" style="left:0;top:0;width:2px;height:2px;background:#b89a6a;border-radius:0 0 2px 0"></div>
<div class="a" style="left:964px;top:0;width:2px;height:2px;background:#b89a6a;border-radius:0 0 0 2px"></div>
<div class="a k" style="left:33px;top:5.4px;color:#dedede">파일(F)</div>
<div class="a k" style="left:67px;top:5.4px;color:#dedede">편집(E)</div>
<div class="a k" style="left:102px;top:5.4px;color:#dedede">이미지(I)</div>
<div class="a k" style="left:142px;top:5.4px;color:#dedede">레이어(L)</div>
<div class="a k" style="left:185px;top:5.4px;color:#dedede">문자(Y)</div>
<div class="a k" style="left:220px;top:5.4px;color:#dedede">선택(S)</div>
<div class="a k" style="left:254px;top:5.4px;color:#dedede">필터(T)</div>
<div class="a k" style="left:288px;top:5.4px;color:#dedede">3D(D)</div>
<div class="a k" style="left:317px;top:5.4px;color:#dedede">보기(V)</div>
<div class="a k" style="left:352px;top:5.4px;color:#dedede">창(W)</div>
<div class="a k" style="left:382px;top:5.4px;color:#dedede">도움말(H)</div>
<!-- window controls -->
<div class="a" style="left:894px;top:1px;width:67px;height:12px;border:1px solid #5e5e5e;border-top:none;border-radius:0 0 2px 2px"></div>
<div class="a" style="left:912px;top:1px;width:1px;height:11px;background:#5e5e5e"></div>
<div class="a" style="left:930px;top:1px;width:1px;height:11px;background:#5e5e5e"></div>
<div class="a" style="left:900px;top:8px;width:6px;height:2px;background:#d0d0d0"></div>
<div class="a" style="left:918px;top:5px;width:7px;height:4px;border:1px solid #d0d0d0;border-top-width:2px"></div>
<svg class="a" style="left:942px;top:3px" width="8" height="7" viewBox="0 0 8 7"><path d="M1 0.8L7 6.2M7 0.8L1 6.2" stroke="#d8d8d8" stroke-width="1.4"/></svg>

<!-- ===== OPTIONS BAR ===== -->
<div class="a" style="left:6px;top:28px;width:1px;height:13px;border-left:1px dotted #6a6a6a"></div>
<svg class="a" style="left:17px;top:30px" width="12" height="11" viewBox="0 0 12 11"><g fill="#e6e6e6"><rect x="1.5" y="5" width="9" height="1"/><rect x="5.5" y="1" width="1" height="9"/><path d="M6 0L8 2.2H4z M6 11L8 8.8H4z M0.5 5.5L2.7 3.5V7.5z M11.5 5.5L9.3 3.5V7.5z"/></g></svg>
<svg class="a" style="left:36px;top:33px" width="7" height="4" viewBox="0 0 7 4"><path d="M0.5 0.5L3.5 3.3L6.5 0.5" stroke="#aaa" fill="none" stroke-width="1"/></svg>
<div class="a" style="left:48px;top:25px;width:1px;height:19px;background:#3f3f3f"></div>
<div class="a" style="left:53px;top:31px;width:9px;height:9px;background:#474747;border:1px solid #6e6e6e;border-radius:1.5px"></div>
<div class="a k" style="left:67px;top:31px;color:#dcdcdc;letter-spacing:-0.25px">자동 선택:</div>
<div class="a" style="left:120px;top:28px;width:44px;height:14px;background:#464646;border:1px solid #4a4a4a;border-radius:2px"></div>
<div class="a k" style="left:126px;top:30px;color:#dcdcdc">레이어</div>
<svg class="a" style="left:157px;top:34px" width="7" height="4" viewBox="0 0 7 4"><path d="M0.5 0.5L3.5 3.3L6.5 0.5" stroke="#aaa" fill="none" stroke-width="1"/></svg>
<div class="a" style="left:172px;top:25px;width:1px;height:19px;background:#3f3f3f"></div>
<div class="a" style="left:177px;top:31px;width:9px;height:9px;background:#d8d8d8;border-radius:1.5px"></div>
<svg class="a" style="left:177px;top:31px" width="9" height="9" viewBox="0 0 9 9"><path d="M2 4.5L3.8 6.3L7 2.6" stroke="#333" fill="none" stroke-width="1.5"/></svg>
<div class="a k" style="left:191px;top:31px;color:#dcdcdc;letter-spacing:-0.3px">변형 컨트롤 표시</div>
<div class="a" style="left:271px;top:25px;width:1px;height:19px;background:#3f3f3f"></div>
<!-- align icons -->
<svg class="a" style="left:282px;top:28px" width="180" height="14" viewBox="0 0 180 14"><g fill="#8c8c8c">
<rect x="0" y="0" width="1" height="13"/><rect x="2" y="3" width="6" height="2.5"/><rect x="2" y="7.5" width="10" height="2.5"/>
<rect x="25.5" y="0" width="1" height="13"/><rect x="23" y="3" width="6" height="2.5"/><rect x="20.5" y="7.5" width="11" height="2.5"/>
<rect x="49" y="0" width="1" height="13"/><rect x="43" y="3" width="5" height="2.5"/><rect x="38.5" y="7.5" width="9.5" height="2.5"/>
<rect x="64" y="2" width="12" height="1"/><rect x="66" y="5" width="8" height="3"/><rect x="64" y="10" width="12" height="1"/>
<rect x="96.5" y="1" width="11.5" height="1"/><rect x="97.5" y="3" width="3" height="9"/><rect x="102.5" y="3" width="3" height="5.5"/>
<rect x="116.8" y="6" width="10.5" height="1"/><rect x="118.5" y="2" width="3" height="9"/><rect x="123.5" y="3.5" width="3" height="6"/>
<rect x="136" y="12" width="11.5" height="1"/><rect x="137.5" y="1" width="3" height="10"/><rect x="142.5" y="5" width="3" height="6"/>
<rect x="162.5" y="0.5" width="1" height="13"/><rect x="169" y="0.5" width="1" height="13"/><rect x="165" y="3" width="3" height="8"/>
</g></svg>
<div class="a" style="left:369px;top:25px;width:1px;height:19px;background:#3f3f3f"></div>
<div class="a" style="left:466px;top:25px;width:1px;height:19px;background:#3f3f3f"></div>
<svg class="a" style="left:473px;top:32px" width="14" height="5" viewBox="0 0 14 5"><g fill="#e8e8e8"><circle cx="2" cy="2.5" r="1.7"/><circle cx="7" cy="2.5" r="1.7"/><circle cx="12" cy="2.5" r="1.7"/></g></svg>
<div class="a" style="left:496px;top:25px;width:1px;height:19px;background:#3f3f3f"></div>
<div class="a k" style="left:503px;top:29.3px;color:#8e8e8e;letter-spacing:-0.35px">3D 모드:</div>
<svg class="a" style="left:545px;top:27px" width="98" height="15" viewBox="0 0 98 15"><g stroke="#8c8c8c" fill="none" stroke-width="1.2">
<circle cx="9" cy="6" r="3.6"/><path d="M5.5 5.5C2 5.5 1 8 2 10C3 12 6 12.5 8 12.5H14C16 12.5 16.5 10 15.5 8.5"/><path d="M4 10.5L6.5 12.8L4 14" fill="#8c8c8c"/>
<circle cx="28.5" cy="7.5" r="6"/><circle cx="28.5" cy="7.5" r="2.5"/><path d="M23.5 4L25 1.8L26.5 3.5" />
<path d="M48 1V14M42 7.5H54"/><path d="M46 3L48 1L50 3M46 12L48 14L50 12M44 5.5L42 7.5L44 9.5M52 5.5L54 7.5L52 9.5" /><circle cx="48" cy="7.5" r="2.2"/>
<circle cx="68" cy="7.5" r="2.6"/><path d="M68 1V4.5M68 10.5V14M61 7.5H65M71 7.5H75"/><path d="M66.5 2.5L68 1L69.5 2.5M66.5 12.5L68 14L69.5 12.5M62.5 6L61 7.5L62.5 9M73.5 6L75 7.5L73.5 9" fill="#8c8c8c"/>
<rect x="80.5" y="4.5" width="7" height="6" fill="#8c8c8c"/><path d="M88 7.5L91 5V10z" fill="#8c8c8c"/><path d="M95 2L92 7.5L95 13"/>
</g></svg>
<!-- right icons -->
<svg class="a" style="left:892px;top:28px" width="13" height="13" viewBox="0 0 13 13"><circle cx="5" cy="5" r="4" stroke="#dcdcdc" stroke-width="1.4" fill="none"/><path d="M8 8L12 12" stroke="#dcdcdc" stroke-width="1.6"/></svg>
<div class="a" style="left:914px;top:29px;width:13px;height:11px;border:1px solid #d8d8d8;border-top-width:2px"></div>
<div class="a" style="left:916px;top:32px;width:2px;height:5px;background:#d8d8d8"></div>
<svg class="a" style="left:934px;top:33px" width="6" height="4" viewBox="0 0 6 4"><path d="M0.5 0.5L3 3L5.5 0.5" stroke="#bbb" fill="none"/></svg>
<svg class="a" style="left:944px;top:27px" width="14" height="15" viewBox="0 0 14 15"><g stroke="#e0e0e0" stroke-width="1.5" fill="none"><path d="M4 5.5H1V13.8H13V5.5H10"/><path d="M7 10V1.5"/><path d="M4.3 4.2L7 1.3L9.7 4.2" fill="#e0e0e0"/></g></svg>

<!-- ===== INFO PANEL ===== -->
<div class="a" style="left:712px;top:57px;width:28px;height:18px;background:#474747"></div>
<div class="a" style="left:740px;top:57px;width:1px;height:18px;background:#3e3e3e"></div>
<div class="a" style="left:741px;top:57px;width:47px;height:18px;background:#474747"></div>
<div class="a" style="left:788px;top:57px;width:29px;height:18px;background:#535353"></div>
<div class="a" style="left:817px;top:57px;width:46px;height:18px;background:#474747"></div>
<div class="a" style="left:863px;top:57px;width:1px;height:18px;background:#3e3e3e"></div>
<div class="a k" style="left:719px;top:61px;color:#bdbdbd">색상</div>
<div class="a k" style="left:748px;top:61px;color:#bdbdbd">색상 견본</div>
<div class="a k" style="left:795px;top:61px;color:#f0f0f0">정보</div>
<div class="a k" style="left:823px;top:61px;color:#bdbdbd">작업 내역</div>
<div class="a" style="left:952px;top:63px;width:7px;height:5px;border-top:2px solid #a8a8a8;border-bottom:2px solid #a8a8a8"></div>
<div class="a" style="left:952px;top:65px;width:7px;height:1px;background:#8a8a8a"></div>
<div class="a" style="left:712px;top:134px;width:251px;height:1px;background:#474747"></div>
<div class="a" style="left:712px;top:163px;width:251px;height:1px;background:#474747"></div>
<div class="a" style="left:712px;top:184px;width:251px;height:1px;background:#474747"></div>
<div class="a" style="left:837px;top:76px;width:1px;height:87px;background:#474747"></div>
<svg class="a" style="left:712px;top:75px" width="251" height="110" viewBox="712 75 251 110">
<g id="edr"><g transform="translate(717.5 94.5) scale(0.68) translate(-11.5 -129.6)"><path d="M19 134L12.5 140.5C11.8 141.2 11.8 142 12.5 142.6C13.1 143.2 13.9 143.2 14.6 142.5L21 136" fill="none" stroke="#e0e0e0" stroke-width="1.5"/><path d="M18 133L22 137L23 136L22 135L24.5 132.5C25 131.5 24 130 23 130.5L20.5 133L19.5 132z" fill="#e8e8e8"/></g><path d="M724.3 101.8H727.3L725.8 103.4z" fill="#d6d6d6"/></g>
<use href="#edr" x="125" y="0"/>
<g fill="#d6d6d6"><rect x="717.5" y="150" width="8" height="1"/><rect x="721" y="146.5" width="1" height="8"/><path d="M723.5 152.5H726.5L725 154z"/></g>
<g fill="none" stroke="#d6d6d6" stroke-width="1"><path d="M845 148.5H850.5V155.5H844.5V149.5"/></g><path d="M849.5 146L851.5 148.5H849.5z M843 154.5H845.5V156.8z" fill="#d6d6d6"/>
</svg>
<div class="a" style="left:737px;top:84px;font-size:8.5px;line-height:9.8px;color:#d8d8d8;white-space:pre;letter-spacing:0.4px">R :
G :
B :</div>
<div class="a" style="left:862px;top:84px;font-size:8.5px;line-height:9.8px;color:#d8d8d8;white-space:pre;letter-spacing:0.4px">R :
G :
B :</div>
<div class="a k" style="left:726px;top:121px;color:#d8d8d8;letter-spacing:-0.5px">8비트</div>
<div class="a k" style="left:851px;top:121px;color:#d8d8d8;letter-spacing:-0.5px">8비트</div>
<div class="a" style="left:737px;top:142px;font-size:8.5px;line-height:9.6px;color:#d8d8d8;white-space:pre;letter-spacing:0.4px">X :
Y :</div>
<div class="a" style="left:859px;top:142px;font-size:8.5px;line-height:9.6px;color:#d8d8d8;white-space:pre;letter-spacing:0.4px">W :
 H :</div>
<div class="a k" style="left:720px;top:171px;color:#dcdcdc;letter-spacing:-0.4px">문서:18.6M/60.2M</div>

<!-- ===== CHARACTER PANEL ===== -->
<div class="a" style="left:712px;top:255px;width:28px;height:19px;background:#474747"></div>
<div class="a" style="left:740px;top:255px;width:1px;height:19px;background:#3e3e3e"></div>
<div class="a" style="left:741px;top:255px;width:28px;height:19px;background:#474747"></div>
<div class="a" style="left:769px;top:255px;width:29px;height:19px;background:#535353"></div>
<div class="a" style="left:798px;top:255px;width:27px;height:19px;background:#474747"></div>
<div class="a" style="left:825px;top:255px;width:1px;height:19px;background:#3e3e3e"></div>
<div class="a k" style="left:719px;top:260px;color:#bdbdbd">조정</div>
<div class="a k" style="left:747px;top:260px;color:#bdbdbd">단락</div>
<div class="a k" style="left:776px;top:260px;color:#f0f0f0">문자</div>
<div class="a k" style="left:804px;top:260px;color:#bdbdbd">속성</div>
<div class="a" style="left:952px;top:261px;width:7px;height:5px;border-top:2px solid #a8a8a8;border-bottom:2px solid #a8a8a8"></div>
<div class="a" style="left:952px;top:263px;width:7px;height:1px;background:#8a8a8a"></div>
<div class="a" style="left:716px;top:283px;width:90px;height:13px;background:#464646;border:1px solid #4b4b4b;border-radius:2px"></div><div class="a" style="left:797px;top:284px;width:1px;height:11px;background:#3d3d3d"></div><svg class="a" style="left:798.0px;top:288.0px" width="7" height="4" viewBox="0 0 7 4"><path d="M0.5 0.5L3.5 3.3L6.5 0.5" stroke="#a8a8a8" fill="none" stroke-width="1"/></svg><div class="a" style="left:828px;top:283px;width:56px;height:13px;background:#464646;border:1px solid #4b4b4b;border-radius:2px"></div><div class="a" style="left:873px;top:284px;width:1px;height:11px;background:#3d3d3d"></div><svg class="a" style="left:875.0px;top:288.0px" width="7" height="4" viewBox="0 0 7 4"><path d="M0.5 0.5L3.5 3.3L6.5 0.5" stroke="#a8a8a8" fill="none" stroke-width="1"/></svg>
<div class="a" style="left:719px;top:285px;font-size:7.5px;line-height:9px;color:#e6e6e6;font-weight:bold;white-space:nowrap;letter-spacing:-0.2px">배달의민족 을...</div>
<div class="a" style="left:834px;top:285px;font-size:8px;line-height:9px;color:#d8d8d8">-</div>
<div class="a" style="left:730px;top:302px;width:63px;height:13px;background:#464646;border:1px solid #4b4b4b;border-radius:2px"></div><div class="a" style="left:783px;top:303px;width:1px;height:11px;background:#3d3d3d"></div><svg class="a" style="left:784.5px;top:307.0px" width="7" height="4" viewBox="0 0 7 4"><path d="M0.5 0.5L3.5 3.3L6.5 0.5" stroke="#a8a8a8" fill="none" stroke-width="1"/></svg><div class="a" style="left:826px;top:302px;width:58px;height:13px;background:#464646;border:1px solid #4b4b4b;border-radius:2px"></div><div class="a" style="left:873px;top:303px;width:1px;height:11px;background:#3d3d3d"></div><svg class="a" style="left:875.0px;top:307.0px" width="7" height="4" viewBox="0 0 7 4"><path d="M0.5 0.5L3.5 3.3L6.5 0.5" stroke="#a8a8a8" fill="none" stroke-width="1"/></svg><div class="a" style="left:730px;top:318px;width:63px;height:13px;background:#464646;border:1px solid #4b4b4b;border-radius:2px"></div><div class="a" style="left:783px;top:319px;width:1px;height:11px;background:#3d3d3d"></div><svg class="a" style="left:784.5px;top:323.0px" width="7" height="4" viewBox="0 0 7 4"><path d="M0.5 0.5L3.5 3.3L6.5 0.5" stroke="#a8a8a8" fill="none" stroke-width="1"/></svg><div class="a" style="left:826px;top:318px;width:58px;height:13px;background:#464646;border:1px solid #4b4b4b;border-radius:2px"></div><div class="a" style="left:873px;top:319px;width:1px;height:11px;background:#3d3d3d"></div><svg class="a" style="left:875.0px;top:323.0px" width="7" height="4" viewBox="0 0 7 4"><path d="M0.5 0.5L3.5 3.3L6.5 0.5" stroke="#a8a8a8" fill="none" stroke-width="1"/></svg>
<div class="a" style="left:732px;top:304px;font-size:8.5px;line-height:10px;color:#e4e4e4">50 pt</div>
<div class="a" style="left:828px;top:304px;font-size:8.5px;line-height:10px;color:#e4e4e4">100 pt</div>
<div class="a" style="left:828px;top:320px;font-size:8.5px;line-height:10px;color:#e4e4e4">0</div>
<div class="a" style="left:730px;top:333px;width:35px;height:14px;background:#464646;border:1px solid #4b4b4b;border-radius:2px"></div><div class="a" style="left:849px;top:333px;width:35px;height:14px;background:#464646;border:1px solid #4b4b4b;border-radius:2px"></div><div class="a" style="left:730px;top:350px;width:35px;height:14px;background:#464646;border:1px solid #4b4b4b;border-radius:2px"></div>
<div class="a" style="left:732px;top:335px;font-size:8.5px;line-height:10px;color:#e4e4e4">100%</div>
<div class="a" style="left:851px;top:335px;font-size:8.5px;line-height:10px;color:#e4e4e4">100%</div>
<div class="a" style="left:732px;top:352px;font-size:8.5px;line-height:10px;color:#e4e4e4">0 pt</div>
<div class="a k" style="left:823px;top:352px;color:#cfcfcf;letter-spacing:-0.6px">색상:</div>
<div class="a" style="left:848px;top:349px;width:36px;height:16px;background:#000;border:1px solid #3a3a3a"></div>
<svg class="a" style="left:712px;top:300px" width="175" height="130" viewBox="712 300 175 130">
<g fill="#e0e0e0">
<!-- size icon -->
<path d="M719.5 304H727V306.5H726.3C726.2 305.3 725.9 305 724.8 305H724V313H725.2V313.8H721.3V313H722.5V305H721.7C720.6 305 720.3 305.3 720.2 306.5H719.5z"/>
<path d="M715.5 309.5H719.5V310.7H719.1C719 310.1 718.9 310 718.3 310H718V313H718.6V313.6H716.4V313H717V310H716.7C716.1 310 716 310.1 715.9 310.7H715.5z"/>
<!-- leading icon -->
<text x="813.5" y="308" font-family="Liberation Sans" font-size="6.5" font-weight="bold">A</text><text x="813.5" y="314.5" font-family="Liberation Sans" font-size="6.5" font-weight="bold">A</text>
<path d="M811.5 305V312.5" stroke="#e0e0e0" stroke-width="0.8"/><path d="M810.5 305.5L811.5 304L812.5 305.5z M810.5 312L811.5 313.5L812.5 312z"/>
<path d="M813 303.3L816 302.5L819 303.3" stroke="#e0e0e0" fill="none" stroke-width="0.6"/>
<!-- kerning -->
<text x="715" y="327.5" font-family="Liberation Sans" font-size="9" letter-spacing="-1.3">V/A</text>
<path d="M719 330.3H726" stroke="#e0e0e0" stroke-width="0.8"/><path d="M718.5 330.3L720.3 329V331.6z"/>
<!-- tracking -->
<rect x="812" y="318.5" width="11" height="7.5" fill="#e0e0e0"/><text x="812.5" y="325.3" font-family="Liberation Sans" font-size="7.5" fill="#444" letter-spacing="-0.8">VA</text>
<path d="M812.5 329.3H822.5" stroke="#e0e0e0" stroke-width="0.8"/><path d="M812 329.3L813.5 328V330.5z M823 329.3L821.5 328V330.5z"/>
<!-- v scale -->
<path d="M719.5 335H726.5V337.5H725.8C725.7 336.3 725.4 336 724.3 336H723.5V344H724.7V344.8H721.3V344H722.5V336H721.7C720.6 336 720.3 336.3 720.2 337.5H719.5z"/>
<path d="M717 335.5V344.5" stroke="#e0e0e0" stroke-width="0.8"/><path d="M716 336.5L717 335L718 336.5z M716 343.5L717 345L718 343.5z"/>
<!-- h scale -->
<path d="M836 335H845V337.5H844.3C844.2 336.3 843.9 336 842.8 336H841V342H842.2V342.8H838.8V342H840V336H838.2C837.1 336 836.8 336.3 836.7 337.5H836z"/>
<path d="M835.5 345H845.5" stroke="#e0e0e0" stroke-width="0.8"/><path d="M835 345L836.5 343.8V346.2z M846 345L844.5 343.8V346.2z"/>
<!-- baseline -->
<text x="715.5" y="360" font-family="Liberation Sans" font-size="8" letter-spacing="-0.5">A</text><text x="720.5" y="358" font-family="Liberation Sans" font-size="6">a</text>
<path d="M724 359.5V363" stroke="#e0e0e0" stroke-width="0.8"/><path d="M723 361.8L724 363.3L725 361.8z"/>
</g>
<!-- style buttons -->
<rect x="728.6" y="368" width="16" height="15.6" fill="#383838"/>
<g font-family="Liberation Serif" fill="#e8e8e8" font-size="13">
<text x="731.5" y="381" font-weight="bold">T</text>
<text x="750" y="381" font-style="italic">T</text>
<text x="765" y="381" font-weight="bold" letter-spacing="-1">TT</text>
<text x="784" y="381" font-weight="bold">T</text><text x="792" y="381" font-weight="bold" font-size="8">T</text>
<text x="802" y="381" font-weight="bold">T</text><text x="811" y="375" font-size="6">1</text>
<text x="820" y="381" font-weight="bold">T</text><text x="829" y="382" font-size="6">1</text>
<text x="839" y="380" font-weight="bold">T</text><rect x="838.5" y="381.5" width="11" height="1"/>
<text x="857" y="381" font-weight="bold">T</text><rect x="856" y="376.5" width="11" height="1"/>
</g>
<g font-family="Liberation Serif" fill="#888" stroke="#888" stroke-width="0.35" font-size="13">
<text x="731.5" y="403">fi</text>
<path d="M751 401C752 397 754 395 756 395C758 395 758.5 397 757.5 399C756.5 401.5 754.5 402.5 753 402C751.5 401.5 752 399 754 398.5C756 398 759 397.5 761 396" fill="none" stroke-width="1"/>
<text x="767.5" y="403">st</text>
<text x="785" y="403" font-style="italic">A</text>
<text x="802" y="403">aa</text><path d="M802.5 392H813M811 390.5L813 392L811 393.5" stroke="#7e7e7e" fill="none" stroke-width="0.9"/>
<text x="821" y="403" font-style="italic">T</text>
<text x="839" y="403">1</text><text x="846" y="397" font-size="7.5">st</text>
<text x="858" y="403" font-size="12">&#189;</text>
</g>
<g fill="#d0d0d0"><text x="827" y="419" font-family="Liberation Sans" font-size="7" letter-spacing="-0.5">a</text><text x="830" y="421" font-family="Liberation Sans" font-size="7">a</text></g>
</svg>
<div class="a" style="left:716px;top:408px;width:107px;height:15px;background:#464646;border:1px solid #4b4b4b;border-radius:2px"></div><svg class="a" style="left:814.5px;top:414.0px" width="7" height="4" viewBox="0 0 7 4"><path d="M0.5 0.5L3.5 3.3L6.5 0.5" stroke="#a8a8a8" fill="none" stroke-width="1"/></svg><div class="a" style="left:841px;top:408px;width:43px;height:15px;background:#464646;border:1px solid #4b4b4b;border-radius:2px"></div><svg class="a" style="left:875.5px;top:414.0px" width="7" height="4" viewBox="0 0 7 4"><path d="M0.5 0.5L3.5 3.3L6.5 0.5" stroke="#a8a8a8" fill="none" stroke-width="1"/></svg>
<div class="a k" style="left:722px;top:410px;color:#dcdcdc;letter-spacing:-0.3px">영어: 미국</div>
<div class="a k" style="left:847px;top:410px;color:#dcdcdc;letter-spacing:-0.8px">선명...</div>

<!-- ===== LAYERS PANEL ===== -->
<div class="a" style="left:712px;top:427px;width:36px;height:19px;background:#535353"></div>
<div class="a" style="left:748px;top:427px;width:27px;height:19px;background:#474747"></div>
<div class="a" style="left:775px;top:427px;width:1px;height:19px;background:#3e3e3e"></div>
<div class="a" style="left:776px;top:427px;width:28px;height:19px;background:#474747"></div>
<div class="a" style="left:804px;top:427px;width:1px;height:19px;background:#3e3e3e"></div>
<div class="a k" style="left:719px;top:432px;color:#f0f0f0">레이어</div>
<div class="a k" style="left:754px;top:432px;color:#bdbdbd">채널</div>
<div class="a k" style="left:782px;top:432px;color:#bdbdbd">패스</div>
<div class="a" style="left:952px;top:434px;width:7px;height:5px;border-top:2px solid #a8a8a8;border-bottom:2px solid #a8a8a8"></div>
<div class="a" style="left:952px;top:436px;width:7px;height:1px;background:#8a8a8a"></div>
<div class="a" style="left:715px;top:452px;width:64px;height:14px;background:#464646;border:1px solid #4b4b4b;border-radius:2px"></div><svg class="a" style="left:770.0px;top:458.0px" width="7" height="4" viewBox="0 0 7 4"><path d="M0.5 0.5L3.5 3.3L6.5 0.5" stroke="#a8a8a8" fill="none" stroke-width="1"/></svg>
<svg class="a" style="left:719px;top:455px" width="8" height="8" viewBox="0 0 8 8"><circle cx="3.2" cy="3.2" r="2.3" fill="none" stroke="#e6e6e6" stroke-width="1.2"/><path d="M4.8 4.8L7.3 7.3" stroke="#e6e6e6" stroke-width="1.5"/></svg>
<div class="a k" style="left:729px;top:454px;color:#e6e6e6">종류</div>
<div class="a" style="left:712px;top:468px;width:251px;height:1px;background:#4a4a4a"></div>
<div class="a" style="left:715px;top:472px;width:89px;height:14px;background:#464646;border:1px solid #4b4b4b;border-radius:2px"></div><svg class="a" style="left:795.5px;top:478.0px" width="7" height="4" viewBox="0 0 7 4"><path d="M0.5 0.5L3.5 3.3L6.5 0.5" stroke="#a8a8a8" fill="none" stroke-width="1"/></svg>
<div class="a k" style="left:721px;top:474px;color:#e6e6e6">표준</div>
<div class="a k" style="left:810.5px;top:473px;color:#d2d2d2;letter-spacing:-0.6px">불투명도:</div>
<div class="a" style="left:850px;top:471px;width:40px;height:14px;background:#464646;border:1px solid #4b4b4b;border-radius:2px"></div><div class="a" style="left:880px;top:472px;width:1px;height:12px;background:#3d3d3d"></div><svg class="a" style="left:881.5px;top:476.5px" width="7" height="4" viewBox="0 0 7 4"><path d="M0.5 0.5L3.5 3.3L6.5 0.5" stroke="#a8a8a8" fill="none" stroke-width="1"/></svg>
<div class="a" style="left:853px;top:473px;font-size:8.5px;line-height:10px;color:#e8e8e8">100%</div>
<div class="a" style="left:712px;top:488px;width:251px;height:1px;background:#4a4a4a"></div>
<div class="a k" style="left:717px;top:492px;color:#d2d2d2;letter-spacing:-0.2px">잠그기:</div>
<div class="a k" style="left:835.5px;top:492px;color:#d2d2d2">칠:</div>
<div class="a" style="left:850px;top:491px;width:40px;height:14px;background:#464646;border:1px solid #4b4b4b;border-radius:2px"></div><div class="a" style="left:880px;top:492px;width:1px;height:12px;background:#3d3d3d"></div><svg class="a" style="left:881.5px;top:496.5px" width="7" height="4" viewBox="0 0 7 4"><path d="M0.5 0.5L3.5 3.3L6.5 0.5" stroke="#a8a8a8" fill="none" stroke-width="1"/></svg>
<div class="a" style="left:853px;top:493px;font-size:8.5px;line-height:10px;color:#e8e8e8">100%</div>
<svg class="a" style="left:712px;top:446px" width="251" height="62" viewBox="712 446 251 62">
<g fill="none" stroke="#d8d8d8" stroke-width="1">
<rect x="796" y="454.5" width="9.5" height="8"/>
<circle cx="816.8" cy="459" r="4.3"/>
<rect x="845" y="455.5" width="6.5" height="6.5"/>
<path d="M861 462.5V455H865.5L868.5 458V462.5" />
<rect x="884.5" y="453" width="6" height="11.5" rx="3" stroke="#3e3e3e" fill="#474747"/>
</g>
<path d="M797 461.5L799 458.5L800.5 460L802 458L804.5 461.5z" fill="#d8d8d8"/>
<path d="M816.8 454.7A4.3 4.3 0 0 0 816.8 463.3z" fill="#d8d8d8" transform="rotate(45 816.8 459)"/>
<path d="M828.8 455H837V457.3H836.4C836.3 456.3 836 456 835 456H833.9V461.3H835V462.3H830.8V461.3H831.9V456H830.8C829.8 456 829.5 456.3 829.4 457.3H828.8z" fill="#d8d8d8"/>
<g fill="#d8d8d8"><rect x="843.8" y="454.3" width="2.4" height="2.4"/><rect x="850.4" y="454.3" width="2.4" height="2.4"/><rect x="843.8" y="460.8" width="2.4" height="2.4"/><rect x="850.4" y="460.8" width="2.4" height="2.4"/></g>
<rect x="860" y="459" width="5" height="4.5" fill="#d8d8d8"/>
<circle cx="887.5" cy="455.6" r="2.6" fill="#e8e8e8"/>
<!-- lock icons -->
<g fill="#e0e0e0">
<rect x="751" y="492.8" width="9" height="9" fill="#e0e0e0"/>
</g>
<g fill="#555"><rect x="753.25" y="492.8" width="2.25" height="2.25"/><rect x="757.75" y="492.8" width="2.25" height="2.25"/><rect x="751" y="495.05" width="2.25" height="2.25"/><rect x="755.5" y="495.05" width="2.25" height="2.25"/><rect x="753.25" y="497.3" width="2.25" height="2.25"/><rect x="757.75" y="497.3" width="2.25" height="2.25"/><rect x="751" y="499.55" width="2.25" height="2.25"/><rect x="755.5" y="499.55" width="2.25" height="2.25"/></g>
<path d="M775.5 492.8L770 498.5" stroke="#e0e0e0" stroke-width="1.6" stroke-linecap="round"/><path d="M769.2 497.8C767 498 766.5 500.5 765.3 503.5C768 503 770.5 502 771 499.5z" fill="#e0e0e0"/>
<g fill="#e0e0e0"><rect x="781" y="497.5" width="9" height="1"/><rect x="785" y="493.5" width="1" height="9"/><path d="M785.5 492.5L787.3 494.5H783.7z M785.5 503.5L787.3 501.5H783.7z M780 498L782 496.2V499.8z M791 498L789 496.2V499.8z"/></g>
<path d="M797 493V501.5H805.5M794.5 496H803V504" stroke="#e0e0e0" fill="none" stroke-width="1"/><path d="M801 494.5L803.5 492.5" stroke="#e0e0e0" stroke-width="0.8"/>
<path d="M811.8 497.5V495.8C811.8 494.2 812.8 493.3 814 493.3C815.2 493.3 816.2 494.2 816.2 495.8V497.5" stroke="#e0e0e0" fill="none" stroke-width="1.1"/><rect x="810.3" y="497.5" width="7.4" height="6" fill="#e0e0e0"/><rect x="813.5" y="499.5" width="1" height="2" fill="#555"/>
</svg>
<div class="a" style="left:712px;top:509px;width:240px;height:196px;background:#535353"></div>
<div class="a" style="left:732px;top:509px;width:220px;height:19px;background:#696969"></div>
<div class="a" style="left:712px;top:528px;width:240px;height:1px;background:#464646"></div>
<div class="a" style="left:731px;top:509px;width:1px;height:19px;background:#4c4c4c"></div>
<svg class="a" style="left:717.5px;top:516.6px" width="10" height="6" viewBox="0 0 10 6"><path d="M0.3 3C2 0.6 3.6 0 5 0C6.4 0 8 0.6 9.7 3C8 5.4 6.4 6 5 6C3.6 6 2 5.4 0.3 3z" fill="#e6e6e6"/><circle cx="5" cy="3" r="1.6" fill="#535353"/></svg>
<svg class="a" style="left:733px;top:510px" width="25" height="18" viewBox="0 0 25 18"><path d="M0.5 4V0.5H8M17 0.5H24.5V4M24.5 13.5V17.5H17M8 17.5H0.5V13.5" stroke="#e0e0e0" fill="none" stroke-width="1"/></svg>
<div class="a" style="left:734.5px;top:512.5px;width:21px;height:14px;border:1px solid #363636;background:repeating-conic-gradient(#cdcdcd 0 25%,#ffffff 0 50%) 0 0/6px 6px"></div>
<div class="a k" style="left:762.5px;top:514.2px;color:#dedede;letter-spacing:-0.3px">레이어 4</div>
<div class="a" style="left:712px;top:548px;width:240px;height:1px;background:#464646"></div>
<div class="a" style="left:731px;top:529px;width:1px;height:19px;background:#4c4c4c"></div>
<div class="a" style="left:718px;top:535.0px;width:8px;height:8px;border:1px solid #4a4a4a"></div>
<div class="a" style="left:735.0px;top:532.5px;width:21px;height:14px;border:1px solid #363636;background:repeating-conic-gradient(#cdcdcd 0 25%,#ffffff 0 50%) 0 0/6px 6px"></div>
<div class="a" style="left:746.5px;top:538.0px;width:9.5px;height:8.5px;background:#535353;border-top:1px solid #2e2e2e;border-left:1px solid #2e2e2e"></div>
<div class="a" style="left:748.5px;top:540.5px;width:5px;height:4.5px;border:1px solid #d8d8d8"></div>
<div class="a k" style="left:762.5px;top:534.2px;color:#dedede;letter-spacing:-0.3px">모양 10</div>
<div class="a" style="left:712px;top:569px;width:240px;height:1px;background:#464646"></div>
<div class="a" style="left:731px;top:549px;width:1px;height:20px;background:#4c4c4c"></div>
<div class="a" style="left:718px;top:555.5px;width:8px;height:8px;border:1px solid #4a4a4a"></div>
<div class="a" style="left:735.0px;top:552.5px;width:21px;height:14px;border:1px solid #363636;background:repeating-conic-gradient(#cdcdcd 0 25%,#ffffff 0 50%) 0 0/6px 6px"></div>
<div class="a" style="left:746.5px;top:558.0px;width:9.5px;height:8.5px;background:#535353;border-top:1px solid #2e2e2e;border-left:1px solid #2e2e2e"></div>
<div class="a" style="left:748.5px;top:560.5px;width:5px;height:4.5px;border:1px solid #d8d8d8"></div>
<div class="a k" style="left:762.5px;top:554.7px;color:#dedede;letter-spacing:-0.3px">모양 9</div>
<div class="a" style="left:712px;top:589px;width:240px;height:1px;background:#464646"></div>
<div class="a" style="left:731px;top:569px;width:1px;height:20px;background:#4c4c4c"></div>
<div class="a" style="left:718px;top:575.5px;width:8px;height:8px;border:1px solid #4a4a4a"></div>
<div class="a" style="left:735.0px;top:572.5px;width:21px;height:14px;border:1px solid #363636;background:repeating-conic-gradient(#cdcdcd 0 25%,#ffffff 0 50%) 0 0/6px 6px"></div>
<div class="a" style="left:746.5px;top:578.0px;width:9.5px;height:8.5px;background:#535353;border-top:1px solid #2e2e2e;border-left:1px solid #2e2e2e"></div>
<div class="a" style="left:748.5px;top:580.5px;width:5px;height:4.5px;border:1px solid #d8d8d8"></div>
<div class="a k" style="left:762.5px;top:574.7px;color:#dedede;letter-spacing:-0.3px">모양 11</div>
<div class="a" style="left:712px;top:606px;width:240px;height:1px;background:#464646"></div>
<div class="a" style="left:731px;top:590px;width:1px;height:16px;background:#4c4c4c"></div>
<svg class="a" style="left:717.5px;top:596.1px" width="10" height="6" viewBox="0 0 10 6"><path d="M0.3 3C2 0.6 3.6 0 5 0C6.4 0 8 0.6 9.7 3C8 5.4 6.4 6 5 6C3.6 6 2 5.4 0.3 3z" fill="#e6e6e6"/><circle cx="5" cy="3" r="1.6" fill="#535353"/></svg>
<svg class="a" style="left:735px;top:593.5px" width="18" height="9" viewBox="0 0 18 9"><path d="M0.5 0.8L2.3 4L0.5 7.2" stroke="#bdbdbd" fill="none" stroke-width="0.8"/><path d="M7.5 1H10.5L11.3 2H17V8.2H7.5z" fill="#e0e0e0"/></svg>
<div class="a k" style="left:761px;top:593.7px;color:#dedede;letter-spacing:-0.3px">그룹 1</div>
<div class="a" style="left:712px;top:623px;width:240px;height:1px;background:#464646"></div>
<div class="a" style="left:731px;top:607px;width:1px;height:16px;background:#4c4c4c"></div>
<svg class="a" style="left:717.5px;top:613.1px" width="10" height="6" viewBox="0 0 10 6"><path d="M0.3 3C2 0.6 3.6 0 5 0C6.4 0 8 0.6 9.7 3C8 5.4 6.4 6 5 6C3.6 6 2 5.4 0.3 3z" fill="#e6e6e6"/><circle cx="5" cy="3" r="1.6" fill="#535353"/></svg>
<svg class="a" style="left:735px;top:610.5px" width="18" height="9" viewBox="0 0 18 9"><path d="M0.5 0.8L2.3 4L0.5 7.2" stroke="#bdbdbd" fill="none" stroke-width="0.8"/><path d="M7.5 1H10.5L11.3 2H17V8.2H7.5z" fill="#e0e0e0"/></svg>
<div class="a k" style="left:761px;top:610.7px;color:#dedede;letter-spacing:-0.3px">그룹 2</div>
<div class="a" style="left:712px;top:643px;width:240px;height:1px;background:#464646"></div>
<div class="a" style="left:731px;top:623px;width:1px;height:20px;background:#4c4c4c"></div>
<div class="a" style="left:718px;top:629.5px;width:8px;height:8px;border:1px solid #4a4a4a"></div>
<div class="a" style="left:735.0px;top:626.5px;width:21px;height:14px;border:1px solid #363636;background:repeating-conic-gradient(#cdcdcd 0 25%,#ffffff 0 50%) 0 0/6px 6px"></div>
<div class="a k" style="left:762.5px;top:628.7px;color:#dedede;letter-spacing:-0.3px">레이어 3</div>
<div class="a" style="left:712px;top:664px;width:240px;height:1px;background:#464646"></div>
<div class="a" style="left:731px;top:644px;width:1px;height:20px;background:#4c4c4c"></div>
<div class="a" style="left:718px;top:650.5px;width:8px;height:8px;border:1px solid #4a4a4a"></div>
<div class="a" style="left:735.0px;top:647.5px;width:21px;height:14px;border:1px solid #363636;background:repeating-conic-gradient(#cdcdcd 0 25%,#ffffff 0 50%) 0 0/6px 6px"></div>
<div class="a k" style="left:762.5px;top:649.7px;color:#dedede;letter-spacing:-0.3px">레이어 2</div>
<div class="a" style="left:712px;top:684px;width:240px;height:1px;background:#464646"></div>
<div class="a" style="left:731px;top:664px;width:1px;height:20px;background:#4c4c4c"></div>
<div class="a" style="left:718px;top:670.5px;width:8px;height:8px;border:1px solid #4a4a4a"></div>
<div class="a" style="left:735.0px;top:667.5px;width:21px;height:14px;border:1px solid #363636;background:repeating-conic-gradient(#cdcdcd 0 25%,#ffffff 0 50%) 0 0/6px 6px"></div>
<div class="a k" style="left:762.5px;top:669.7px;color:#dedede;letter-spacing:-0.3px">레이어 1</div>
<div class="a" style="left:712px;top:704px;width:240px;height:1px;background:#464646"></div>
<div class="a" style="left:731px;top:685px;width:1px;height:19px;background:#4c4c4c"></div>
<svg class="a" style="left:717.5px;top:692.6px" width="10" height="6" viewBox="0 0 10 6"><path d="M0.3 3C2 0.6 3.6 0 5 0C6.4 0 8 0.6 9.7 3C8 5.4 6.4 6 5 6C3.6 6 2 5.4 0.3 3z" fill="#e6e6e6"/><circle cx="5" cy="3" r="1.6" fill="#535353"/></svg>
<div class="a" style="left:735px;top:689px;width:21px;height:14px;background:#fff;border:1px solid #2e2e2e"></div>
<div class="a k" style="left:762.5px;top:690.2px;color:#dedede">배경</div>
<svg class="a" style="left:935px;top:691px" width="8" height="9" viewBox="0 0 8 9"><path d="M1.8 4V2.6C1.8 1.2 2.7 0.5 4 0.5C5.3 0.5 6.2 1.2 6.2 2.6V4" stroke="#d8d8d8" fill="none" stroke-width="0.9"/><rect x="0.5" y="4" width="7" height="4.5" fill="none" stroke="#d8d8d8" stroke-width="0.9"/><rect x="3.5" y="5.5" width="1" height="1.5" fill="#d8d8d8"/></svg>
<!-- scrollbar -->
<div class="a" style="left:952px;top:509px;width:11px;height:196px;background:#4a4a4a"></div>
<div class="a" style="left:953.5px;top:522px;width:8px;height:171px;background:#696969"></div>
<svg class="a" style="left:955.5px;top:514px" width="6" height="4" viewBox="0 0 6 4"><path d="M0.5 3.3L3 0.8L5.5 3.3" stroke="#a0a0a0" fill="none" stroke-width="0.9"/></svg>
<svg class="a" style="left:955.5px;top:697px" width="6" height="4" viewBox="0 0 6 4"><path d="M0.5 0.7L3 3.2L5.5 0.7" stroke="#a0a0a0" fill="none" stroke-width="0.9"/></svg>
<!-- footer icons -->
<svg class="a" style="left:712px;top:705px" width="251" height="18" viewBox="712 705 251 18">
<g fill="none" stroke="#7c7c7c" stroke-width="1"><rect x="788.5" y="712.5" width="5" height="4" rx="2"/><rect x="792" y="712.5" width="5" height="4" rx="2"/></g>
<text x="812.5" y="719" font-family="Liberation Serif" font-style="italic" font-size="10" fill="#e0e0e0" letter-spacing="-0.5">fx</text><rect x="823.5" y="719.5" width="1" height="1" fill="#ccc"/>
<rect x="836" y="711" width="9" height="7" fill="#e0e0e0"/><ellipse cx="840.5" cy="714.5" rx="2.6" ry="2" fill="#535353"/>
<circle cx="864.5" cy="714.5" r="4" fill="none" stroke="#e0e0e0" stroke-width="1.1"/><path d="M864.5 710.5A4 4 0 0 0 864.5 718.5z" fill="#e0e0e0" transform="rotate(45 864.5 714.5)"/><rect x="870" y="719.5" width="1" height="1" fill="#ccc"/>
<path d="M884 711H887.5L888.5 712H893.5V718.5H884z" fill="#e0e0e0"/>
<path d="M909 711.5H915.5V718.5H910.5L909 717z" fill="none" stroke="#e0e0e0" stroke-width="1"/><rect x="911" y="714" width="3" height="3" fill="#e0e0e0"/>
<path d="M932 712.5H940M934.5 712.5V711H937.5V712.5" stroke="#e0e0e0" fill="none" stroke-width="1"/><rect x="933" y="713.5" width="6" height="5.5" fill="none" stroke="#e0e0e0" stroke-width="1"/><path d="M935 714.5V718M937 714.5V718" stroke="#bbb" stroke-width="0.8"/>
</svg>
</body></html>
